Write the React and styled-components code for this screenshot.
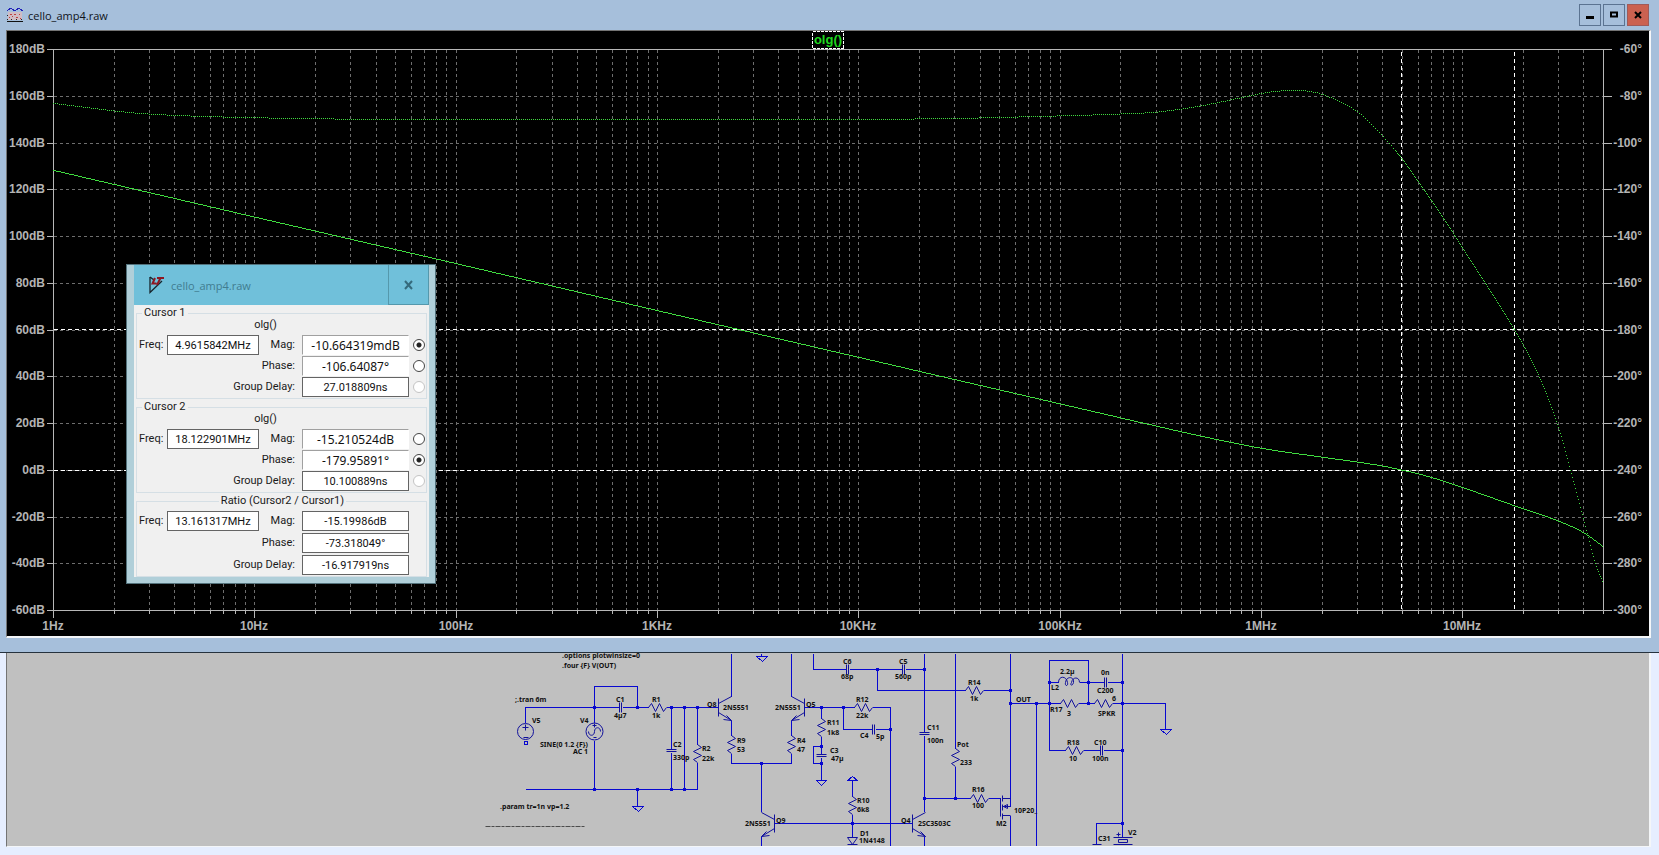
import React from 'react';
import styled, { createGlobalStyle } from 'styled-components';

const GlobalStyle = createGlobalStyle`
  * {
    box-sizing: border-box;
  }

  body {
    margin: 0;
    background: #e6eeff;
  }
`;

const Page = styled.div`
  display: flex;
  flex-direction: column;
  min-height: 100vh;
  font-family: 'Open Sans', 'Noto Sans', sans-serif;
`;

const PlotWindow = styled.section`
  padding: 0 8px 14px 6px;
  background: #a6bfdb;
  border-bottom: 1px solid #26323e;
`;

const TitleBar = styled.header`
  display: flex;
  align-items: center;
  gap: 5px;
  height: 30px;
  padding: 0 2px 0 1px;
`;

const Title = styled.h1`
  flex: 1;
  margin: 0;
  padding-top: 2px;
  color: #10131a;
  font-size: 11px;
  font-weight: 400;
  line-height: 16px;
`;

const WindowButtons = styled.div`
  display: flex;
  gap: 2px;
`;

const WindowButton = styled.button`
  display: flex;
  align-items: center;
  justify-content: center;
  width: 22px;
  height: 22px;
  padding: 0;
  border: 1px solid ${({ $close }) => ($close ? '#a05a58' : '#5b7391')};
  background: ${({ $close }) => ($close ? '#cb6150' : '#a6bfdb')};
`;

const Pane = styled.div`
  position: relative;
  border: solid;
  border-width: ${({ $top }) => ($top ? '1px 2px 2px 1px' : '0 2px 1px 1px')};
  border-color: #747474 #f4f6f8 #f4f6f8 #747474;
  background: ${({ $background }) => $background};
`;

const Drawing = styled.svg`
  display: block;
  width: 100%;
  height: auto;
`;

const SchematicWindow = styled.section`
  flex: 1;
  padding: 0 8px 7px 6px;
  background: #e6eeff;
`;

const AxisLabel = styled.text`
  fill: #b4b4b4;
  font-family: 'Liberation Sans', Arial, sans-serif;
  font-size: 12px;
  font-weight: 700;
  text-anchor: ${({ $anchor }) => $anchor};
`;

const TraceLabel = styled(AxisLabel)`
  fill: #1fd81f;
  font-size: 13px;
`;

const PartText = styled.text`
  fill: #101010;
  font-family: 'Noto Sans', 'Open Sans', sans-serif;
  font-size: 7px;
  font-weight: 700;
`;

/* Cursor read-out dialog */

const Dialog = styled.div`
  position: absolute;
  top: 233px;
  left: 119px;
  width: 310px;
  padding: 0 6px 6px 7px;
  border: 1px solid #53727c;
  background: #b0cfd9;
`;

const DialogHeader = styled.header`
  display: flex;
  align-items: center;
  gap: 5px;
  height: 40px;
  padding-left: 14px;
  background: #70c0da;
`;

const DialogTitle = styled.h2`
  flex: 1;
  margin: 0;
  color: #417c90;
  font-size: 11px;
  font-weight: 400;
`;

const DialogClose = styled.button`
  display: flex;
  align-items: center;
  justify-content: center;
  width: 41px;
  height: 40px;
  padding: 0;
  border: solid #5598ac;
  border-width: 0 1px 1px;
  background: #70c0da;
`;

const DialogBody = styled.form`
  display: flex;
  flex-direction: column;
  gap: 2px;
  padding: 2px 2px 0;
  background: #f0f0f0;
  color: #1a1a1a;
  font-family: Roboto, 'Liberation Sans', sans-serif;
  font-size: 11px;
  line-height: 12px;
`;

const Group = styled.fieldset`
  min-width: 0;
  margin: 0;
  padding: 0 0 1px 2px;
  border: 1px solid #d5dfe5;
`;

const GroupTitle = styled.legend`
  margin: ${({ $center }) => ($center ? '0 auto 4px' : '0 0 0 3px')};
  padding: 0 2px;
`;

const GroupTrace = styled.div`
  margin-bottom: 4px;
  padding-right: 34px;
  text-align: center;
`;

const Fields = styled.div`
  display: grid;
  grid-template-columns: 24px 92px 35px 107px 12px;
  grid-auto-rows: 20px;
  gap: ${({ $loose }) => ($loose ? '2px' : '1px')} 4px;
  align-items: center;
`;

const Label = styled.label`
  grid-column: ${({ $wide }) => ($wide ? '1 / 4' : 'auto')};
  padding-right: ${({ $first }) => ($first ? '0' : '3px')};
  text-align: right;
  white-space: nowrap;
`;

const Value = styled.input`
  width: 100%;
  height: 20px;
  padding: 0;
  border: 1px solid #646464;
  ${({ $sunken }) => $sunken && 'border-color: #a0a0a0 #fff #fff #a0a0a0;'}
  background: #fff;
  color: #101010;
  font-family: ${({ $sunken }) => ($sunken ? "'Noto Sans'" : 'Roboto')}, sans-serif;
  font-size: ${({ $sunken }) => ($sunken ? '12px' : '11px')};
  text-align: center;
`;

const Radio = styled.input`
  appearance: none;
  width: 12px;
  height: 12px;
  margin: 0;
  border: 1px solid #454545;
  border-radius: 50%;
  background: #fff;

  &:checked {
    background: radial-gradient(circle, #222 0 2px, #fff 3px);
  }

  &:disabled {
    border-color: #c4c4c4;
  }
`;

const PlotIcon = () => (
  <svg width="16" height="16" viewBox="0 0 16 16" shapeRendering="crispEdges" aria-hidden="true">
    <path d="M1 5h14v8H1z" fill="#d0bcc4" />
    <path d="M0 4l4-3l4 3l4-3l4 3" fill="none" stroke="#2020b8" />
    <path d="M3 7.500h2M7 7.500h2M12 7.500h1M2 10.500h1M9 10.500h2M5 9.500h1M13 11.500h1" stroke="#c04040" />
    <path d="M0 14.500h16" stroke="#111" />
    <path d="M0 12.500h1M4 12.500h1M9 12.500h1M14 12.500h1M0 8.500h1" stroke="#222" />
  </svg>
);

const DialogIcon = () => (
  <svg width="18" height="18" viewBox="0 0 18 18" aria-hidden="true">
    <path d="M2 1v15.500L14 5" fill="none" stroke="#16242c" strokeWidth="1.300" />
    <path d="M2 1l4 3" stroke="#16242c" strokeWidth="1.300" />
    <path d="M7 2L4.500 7.500H8.500M9 2H16M12.500 2L9 9" fill="none" stroke="#8e1722" strokeWidth="2" />
  </svg>
);

/* Bode plot */

const plot = { left: 46, right: 1596, top: 18, bottom: 579 };
const decadeWidth = (plot.right - plot.left) / Math.log10(5e7);

const freqToX = (freq) => plot.left + Math.log10(freq) * decadeWidth;
const dbToY = (db) => plot.top + ((180 - db) * (plot.bottom - plot.top)) / 240;
const phaseToY = (phase) => plot.top + ((-60 - phase) * (plot.bottom - plot.top)) / 240;

const magnitude = [
  [1, 128.3], [10, 108.3], [100, 88.4], [1e3, 68.3], [1e4, 48.3], [1e5, 28.4], [3e5, 18.9],
  [5e5, 14.6], [1e6, 9.4], [2e6, 5.6], [3e6, 3.5], [4e6, 1.8], [5e6, 0], [6e6, -1.5],
  [8e6, -4.6], [1e7, -7.4], [1.81e7, -15.2], [2e7, -16.5], [3e7, -21.8], [4e7, -26.8], [5e7, -32.8],
];

const phase = [
  [1, -83], [2, -86.3], [3, -87.6], [5, -88.5], [10, -89.2], [30, -89.8], [100, -90], [1e3, -90],
  [1e4, -89.9], [3e4, -89.5], [1e5, -88.4], [2e5, -87.6], [3e5, -86.8], [4e5, -85.5], [5e5, -84.2],
  [6e5, -82.8], [8e5, -80.6], [1e6, -78.8], [1.23e6, -77.8], [1.5e6, -77.4], [2e6, -79.2],
  [3e6, -86.6], [4e6, -97], [5e6, -106.8], [6e6, -116.4], [8e6, -132], [1e7, -145], [1.81e7, -180],
  [2.4e7, -200], [3e7, -222], [3.43e7, -240], [4e7, -261.5], [4.56e7, -279.8], [5e7, -288.5],
];

const toPoints = (data, toY) => data.map(([freq, value]) => [freqToX(freq), toY(value)]);

const slopeAt = (points, i) => {
  const a = points[Math.max(i - 1, 0)];
  const b = points[Math.min(i + 1, points.length - 1)];
  return (b[1] - a[1]) / (b[0] - a[0]);
};

const interpolate = (points, x) => {
  let i = 0;
  while (i < points.length - 2 && points[i + 1][0] < x) i += 1;
  const [x0, y0] = points[i];
  const [x1, y1] = points[i + 1];
  const h = x1 - x0;
  const t = (x - x0) / h;
  const t2 = t * t;
  const t3 = t2 * t;
  return (
    (2 * t3 - 3 * t2 + 1) * y0 +
    (t3 - 2 * t2 + t) * h * slopeAt(points, i) +
    (3 * t2 - 2 * t3) * y1 +
    (t3 - t2) * h * slopeAt(points, i + 1)
  );
};

// one pixel per column, so that the trace keeps hard edges
const solidTrace = (points) => {
  let path = '';
  for (let x = plot.left; x < plot.right; x += 1) {
    path += `M${x} ${Math.round(interpolate(points, x))}h1v1h-1z`;
  }
  return path;
};

const dottedTrace = (points) => {
  let path = '';
  let x = plot.left;
  while (x < plot.right) {
    const y = interpolate(points, x);
    path += `M${x} ${Math.round(y)}h1v1h-1z`;
    x += Math.abs(interpolate(points, x + 1) - y) > 1.2 ? 1 : 2;
  }
  return path;
};

const magnitudePath = solidTrace(toPoints(magnitude, dbToY));
const phasePath = dottedTrace(toPoints(phase, phaseToY));

const gridFreqs = [];
for (let decade = 0; decade < 8; decade += 1) {
  for (let n = 1; n < 10; n += 1) {
    const freq = n * 10 ** decade;
    if (freq <= 5e7) gridFreqs.push({ freq, major: n === 1 });
  }
}

const rows = Array.from({ length: 13 }, (_, i) => i);
const freqLabels = ['1Hz', '10Hz', '100Hz', '1KHz', '10KHz', '100KHz', '1MHz', '10MHz'];

const BodePlot = () => (
  <Drawing viewBox="0 0 1642 605" role="img" aria-label="Open loop gain and phase">
    <g fill="none" shapeRendering="crispEdges" transform="translate(0.5 0.5)">
      <g stroke="#6e6e6e" strokeDasharray="3 3">
        {gridFreqs.map(({ freq }) => (
          <path key={freq} d={`M${Math.round(freqToX(freq))} ${plot.top}V${plot.bottom}`} />
        ))}
        {rows.map((row) => (
          <path key={row} d={`M${plot.left} ${Math.round(dbToY(180 - row * 20))}H${plot.right}`} />
        ))}
      </g>
      <g stroke="#b8b8b8">
        <path d={`M${plot.left} ${plot.top}H${plot.right}V${plot.bottom}H${plot.left}z`} />
        {gridFreqs.map(({ freq, major }) => (
          <path
            key={freq}
            d={`M${Math.round(freqToX(freq))} ${plot.bottom}v${major ? 7 : 3}`}
          />
        ))}
        {rows.map((row) => (
          <path
            key={row}
            d={`M39 ${Math.round(dbToY(180 - row * 20))}h7M${plot.right} ${Math.round(
              dbToY(180 - row * 20)
            )}h8`}
          />
        ))}
      </g>
      <g stroke="#fff" strokeDasharray="4 3">
        <path d="M1394 20V577" />
        <path d="M1507 20V577" />
        <path d={`M${plot.left} 298H${plot.right}`} />
        <path d={`M${plot.left} 439H${plot.right}`} />
      </g>
      <path d="M805 0h31v17h-31z" fill="#000" stroke="#fff" strokeDasharray="3 1" />
    </g>
    <g fill="#3fdc3f" shapeRendering="crispEdges">
      <path d={magnitudePath} />
      <path d={phasePath} />
    </g>
    <TraceLabel x="821" y="13" $anchor="middle">
      olg()
    </TraceLabel>
    {rows.map((row) => (
      <AxisLabel key={row} x="38" y={Math.round(dbToY(180 - row * 20)) + 4} $anchor="end">
        {180 - row * 20}dB
      </AxisLabel>
    ))}
    {rows.map((row) => (
      <AxisLabel key={row} x="1635" y={Math.round(dbToY(180 - row * 20)) + 4} $anchor="end">
        {-60 - row * 20}°
      </AxisLabel>
    ))}
    {freqLabels.map((label, i) => (
      <AxisLabel key={label} x={Math.round(plot.left + i * decadeWidth)} y="599" $anchor="middle">
        {label}
      </AxisLabel>
    ))}
  </Drawing>
);

/* Schematic */

const resistors = [
  [648, 707], [854, 707], [965, 690], [1060, 703], [1094, 703], [1065, 750], [970, 798],
  [697, 744, 'v'], [731, 735, 'v'], [791, 735, 'v'], [821, 718, 'v'], [852, 796, 'v'], [955, 748, 'v'],
];

const capacitors = [
  [620, 707], [847, 669], [903, 669], [873, 729], [1105, 682], [1101, 750],
  [671, 750, 'v'], [821, 755, 'v'], [924, 733, 'v'],
];

const junctions = [
  [594, 707], [637, 707], [671, 707], [684, 707], [697, 707], [594, 789], [637, 789], [671, 789],
  [684, 789], [821, 707], [843, 707], [761, 763], [852, 823], [924, 669], [924, 798], [877, 669],
  [890, 729], [821, 746], [821, 763], [955, 798], [1010, 690], [1010, 703], [1036, 703],
  [1049, 703], [1088, 703], [1122, 703], [1049, 682], [1088, 682], [1122, 682], [1122, 750], [1122, 823],
];

const wires = [
  'M525 722V707H619M622 707H648M666 707H718',
  'M594 707V686H637V707M594 707V722M594 740V789M525 789H697',
  'M637 789V806M671 707V749M671 752V789M684 707V789M697 707V744M697 762V789',
  'M731 653V696M731 720V735M731 753V763H791V753M791 735V720M791 653V696',
  'M804 707H854M872 707H890V845M761 763V811M761 836V845M774 823H912',
  'M924 653V732M924 735V811M924 836V845M761 653V656',
  'M813 653V669H846M849 669H902M905 669H924M877 669V690H965M983 690H1010',
  'M843 707V729H872M875 729H890M821 707V718M821 736V754M821 757V780',
  'M821 746H813V763H821M852 780V796M852 814V837M955 653V748M955 766V798',
  'M924 798H970M988 798H1000M1010 653V806M1010 815V845',
  'M1010 703H1060M1078 703H1094M1112 703H1165V729M1036 703V845',
  'M1049 703V660H1088V703M1049 703V750H1065M1083 750H1099M1103 750H1122',
  'M1049 682H1058M1079 682H1104M1107 682H1122M1122 653V837M1122 823H1096V844',
];

// collector and emitter sit 13px beside the base bar
const transistors = [
  [718, 707, 1], [804, 707, -1], [774, 823, -1], [912, 823, 1],
];

const partTexts = [
  [562, 658, '.options plotwinsize=0'],
  [562, 668, '.four {F} V(OUT)'],
  [515, 702, ';.tran 6m'],
  [532, 723, 'V5'],
  [580, 723, 'V4'],
  [616, 702, 'C1'],
  [614, 718, '4µ7'],
  [652, 702, 'R1'],
  [652, 718, '1k'],
  [588, 747, 'SINE(0 1.2 {F})', 'end'],
  [588, 754, 'AC 1', 'end'],
  [673, 747, 'C2'],
  [673, 760, '330p'],
  [702, 751, 'R2'],
  [702, 761, '22k'],
  [707, 707, 'Q8'],
  [723, 710, '2N5551'],
  [737, 743, 'R9'],
  [737, 752, '53'],
  [775, 710, '2N5551'],
  [806, 707, 'Q5'],
  [797, 743, 'R4'],
  [797, 752, '47'],
  [827, 725, 'R11'],
  [827, 735, '1k8'],
  [830, 753, 'C3'],
  [831, 761, '47µ'],
  [843, 664, 'C6'],
  [841, 679, '68p'],
  [899, 664, 'C5'],
  [895, 679, '560p'],
  [856, 702, 'R12'],
  [856, 718, '22k'],
  [860, 738, 'C4'],
  [876, 739, '5p'],
  [927, 730, 'C11'],
  [927, 743, '100n'],
  [857, 803, 'R10'],
  [857, 812, '6k8'],
  [745, 826, '2N5551'],
  [776, 823, 'Q9'],
  [860, 836, 'D1'],
  [859, 843, '1N4148'],
  [901, 823, 'Q4'],
  [918, 826, '2SC3503C'],
  [968, 685, 'R14'],
  [970, 701, '1k'],
  [957, 747, 'Pot'],
  [960, 765, '233'],
  [972, 792, 'R16'],
  [972, 808, '100'],
  [996, 826, 'M2'],
  [1014, 813, '10P20_'],
  [1016, 702, 'OUT'],
  [1060, 674, '2.2µ'],
  [1051, 690, 'L2'],
  [1101, 675, '0n'],
  [1097, 693, 'C200'],
  [1050, 712, 'R17'],
  [1067, 716, '3'],
  [1112, 701, '6'],
  [1098, 716, 'SPKR'],
  [1067, 745, 'R18'],
  [1069, 761, '10'],
  [1094, 745, 'C10'],
  [1092, 761, '100n'],
  [1098, 841, 'C31'],
  [1128, 835, 'V2'],
  [500, 809, '.param tr=1n vp=1.2'],
];

const Schematic = () => (
  <Drawing viewBox="7 653 1642 193" role="img" aria-label="Amplifier schematic">
    <g transform="translate(0.5 0.5)" fill="none">
      <g stroke="#0808d0" shapeRendering="crispEdges">
        {wires.map((wire) => (
          <path key={wire} d={wire} />
        ))}
        <path d="M632 806h11l-5 5zM756 656h11l-5 5zM816 780h10l-5 5zM847 780h10l-5-4zM1160 729h11l-5 5z" />
        <path d="M524 741h3v3h-3z" />
      </g>
      <g fill="#0808d0" shapeRendering="crispEdges">
        {junctions.map(([x, y]) => (
          <rect key={`${x}-${y}`} x={x - 1.5} y={y - 1.5} width="3" height="3" />
        ))}
      </g>
      <g stroke="#10109c">
        {resistors.map(([x, y, vertical]) => (
          <path
            key={`${x}-${y}`}
            d={
              vertical
                ? `M${x} ${y}l4 3l-8 4l8 4l-8 4l4 3`
                : `M${x} ${y}l3 -4l4 8l4 -8l4 8l3 -4`
            }
          />
        ))}
        {capacitors.map(([x, y, vertical]) => (
          <path
            key={`${x}-${y}`}
            d={
              vertical
                ? `M${x - 5} ${y - 1}h10M${x - 5} ${y + 1}h10`
                : `M${x - 1} ${y - 5}v10M${x + 1} ${y - 5}v10`
            }
          />
        ))}
        {transistors.map(([x, y, side]) => (
          <g key={`${x}-${y}`} transform={`translate(${x} ${y}) scale(${side} 1)`}>
            <path d="M0 -9V9M0 -4L13 -11M0 5L13 13M13 13L8 8M13 13L5 12" />
          </g>
        ))}
        <circle cx="525" cy="731" r="8" />
        <path d="M522 727h6M525 724v6M523 737h5" />
        <circle cx="594" cy="731" r="8.500" />
        <path d="M588 731c0 5 6 5 6 0s6-5 6 0M592 725h4M594 723v4M593 737h3" />
        <path d="M1058 682c0-7 8-7 9 0c1 4-3 4-2 0c1-7 9-6 8 0c-1 4-4 3-2 0c1-6 8-6 8 0" />
        <path d="M847 837h10l-5 7zM847 844h10" />
        <path d="M1000 798V816M1002 795V801M1002 804V810M1002 813V819M1002 798H1010M1002 806H1010M1002 815H1010M1003 806l4-2v4z" />
        <path d="M1113 837h19M1113 844h19M1118 839h9v3h-9zM1092 844h9M1118 832v4M1116 834h4" />
      </g>
      <path d="M485 826H585" stroke="#4c4c4c" strokeDasharray="5 1 3 1" />
    </g>
    {partTexts.map(([x, y, text, anchor]) => (
      <PartText key={`${x}-${y}`} x={x} y={y} textAnchor={anchor}>
        {text}
      </PartText>
    ))}
  </Drawing>
);

const CursorGroup = ({ id, title, trace, freq, mag, phase: phaseValue, delay, selected }) => {
  const hasCursor = Boolean(selected);

  return (
    <Group>
      <GroupTitle $center={!hasCursor}>{title}</GroupTitle>
      {hasCursor && <GroupTrace>{trace}</GroupTrace>}
      <Fields $loose={!hasCursor}>
        <Label htmlFor={`${id}-freq`} $first>
          Freq:
        </Label>
        <Value id={`${id}-freq`} defaultValue={freq} />
        <Label htmlFor={`${id}-mag`}>Mag:</Label>
        <Value id={`${id}-mag`} defaultValue={mag} $sunken={hasCursor} />
        {hasCursor ? (
          <Radio type="radio" name={id} aria-label="Mag" defaultChecked={selected === 'mag'} />
        ) : (
          <span />
        )}
        <Label htmlFor={`${id}-phase`} $wide>
          Phase:
        </Label>
        <Value id={`${id}-phase`} defaultValue={phaseValue} $sunken={hasCursor} />
        {hasCursor ? (
          <Radio type="radio" name={id} aria-label="Phase" defaultChecked={selected === 'phase'} />
        ) : (
          <span />
        )}
        <Label htmlFor={`${id}-delay`} $wide>
          Group Delay:
        </Label>
        <Value id={`${id}-delay`} defaultValue={delay} />
        {hasCursor && <Radio type="radio" name={id} aria-label="Group Delay" disabled />}
      </Fields>
    </Group>
  );
};

const CursorDialog = () => (
  <Dialog role="dialog" aria-label="Cursors">
    <DialogHeader>
      <DialogIcon />
      <DialogTitle>cello_amp4.raw</DialogTitle>
      <DialogClose aria-label="Close cursors">
        <svg width="10" height="10" viewBox="0 0 10 10">
          <path d="M1 1l7 8M8 1l-7 8" stroke="#356a7c" strokeWidth="2" />
        </svg>
      </DialogClose>
    </DialogHeader>
    <DialogBody>
      <CursorGroup
        id="cursor1"
        title="Cursor 1"
        trace="olg()"
        freq="4.9615842MHz"
        mag="-10.664319mdB"
        phase="-106.64087°"
        delay="27.018809ns"
        selected="mag"
      />
      <CursorGroup
        id="cursor2"
        title="Cursor 2"
        trace="olg()"
        freq="18.122901MHz"
        mag="-15.210524dB"
        phase="-179.95891°"
        delay="10.100889ns"
        selected="phase"
      />
      <CursorGroup
        id="ratio"
        title="Ratio (Cursor2 / Cursor1)"
        freq="13.161317MHz"
        mag="-15.19986dB"
        phase="-73.318049°"
        delay="-16.917919ns"
      />
    </DialogBody>
  </Dialog>
);

const App = () => (
  <>
    <GlobalStyle />
    <Page>
      <PlotWindow>
        <TitleBar>
          <PlotIcon />
          <Title>cello_amp4.raw</Title>
          <WindowButtons>
            <WindowButton aria-label="Minimize">
              <svg width="10" height="10" viewBox="0 0 10 10">
                <path d="M1 6h8v3H1z" />
              </svg>
            </WindowButton>
            <WindowButton aria-label="Maximize">
              <svg width="10" height="10" viewBox="0 0 10 10">
                <path d="M2 2.500h6v4H2z" fill="none" stroke="#000" strokeWidth="2" />
              </svg>
            </WindowButton>
            <WindowButton aria-label="Close" $close>
              <svg width="10" height="10" viewBox="0 0 10 10">
                <path d="M2 2l6 6M8 2l-6 6" stroke="#000" strokeWidth="2" />
              </svg>
            </WindowButton>
          </WindowButtons>
        </TitleBar>
        <Pane $top $background="#000">
          <BodePlot />
          <CursorDialog />
        </Pane>
      </PlotWindow>
      <SchematicWindow>
        <Pane $background="#c0c0c0">
          <Schematic />
        </Pane>
      </SchematicWindow>
    </Page>
  </>
);

export default App;
